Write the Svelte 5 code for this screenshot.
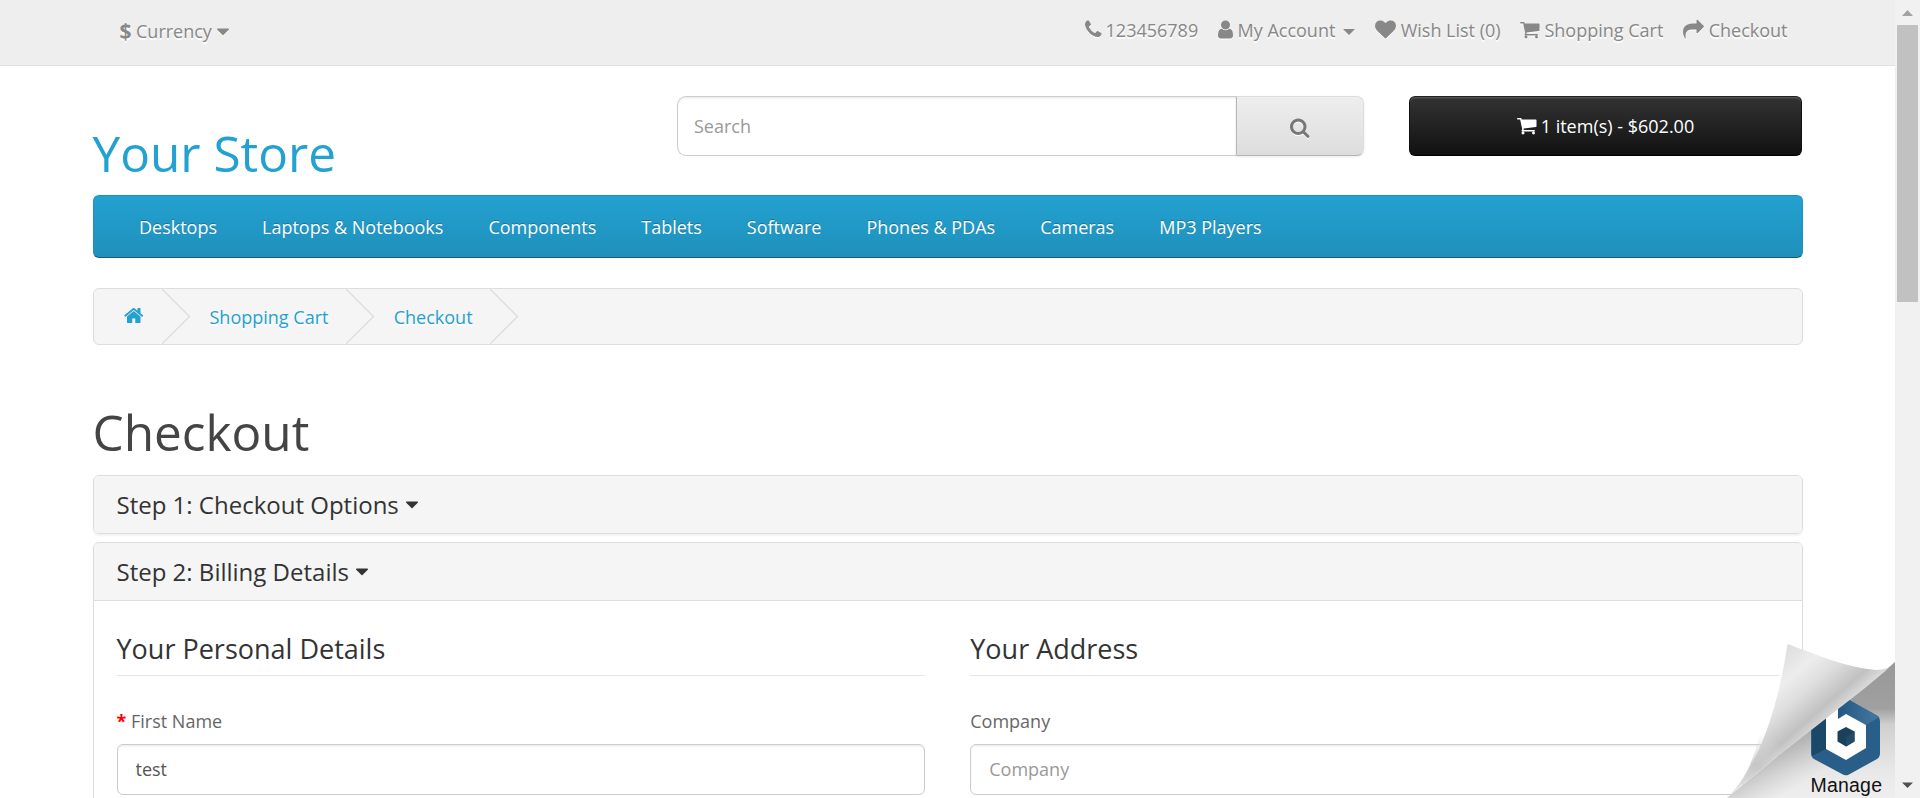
<script>
  const icons = {
    phone: [192, 1408, 'M1600 1240q0 27-10 70.5t-21 68.5q-21 50-122 106-94 51-186 51-27 0-52.5-3.5t-57.5-12.5-47.5-14.5-55.5-20.5-49-18q-98-35-175-83-128-79-264.5-215.5t-215.5-264.5q-48-77-83-175-3-9-18-49t-20.5-55.5-14.5-47.5-12.5-57.5-3.5-52.5q0-92 51-186 56-101 106-122 25-11 68.5-21t70.5-10q14 0 21 3 18 6 53 76 11 19 30 54t35 63.5 31 53.5q3 4 17.5 25t21.5 35.5 7 28.5q0 20-28.5 50t-62 55-62 53-28.5 46q0 9 5 22.5t8.5 20.5 14 24 11.5 19q76 137 174 235t235 174q2 1 19 11.5t24 14 20.5 8.5 22.5 5q18 0 46-28.5t53-62 55-62 50-28.5q14 0 28.5 7t35.5 21.5 25 17.5q25 15 53.5 31t63.5 35 54 30q70 35 76 53 3 7 3 21z'],
    user: [256, 1280, 'M1536 1399q0 109-62.5 187t-150.5 78h-854q-88 0-150.5-78t-62.5-187q0-85 8.5-160.5t31.5-152 58.5-131 94-89 134.5-34.5q131 128 313 128t313-128q76 0 134.5 34.5t94 89 58.5 131 31.5 152 8.5 160.5zm-256-887q0 159-112.5 271.5t-271.5 112.5-271.5-112.5-112.5-271.5 112.5-271.5 271.5-112.5 271.5 112.5 112.5 271.5z'],
    heart: [0, 1792, 'M896 1664q-26 0-44-18l-624-602q-10-8-27.5-26t-55.5-65.5-68-97.5-53.5-121-23.5-138q0-220 127-344t351-124q62 0 126.5 21.5t120 58 95.5 68.5 76 68q36-36 76-68t95.5-68.5 120-58 126.5-21.5q224 0 351 124t127 344q0 221-229 450l-623 600q-18 18-44 18z'],
    cart: [64, 1664, 'M704 1536q0 52-38 90t-90 38-90-38-38-90 38-90 90-38 90 38 38 90zm896 0q0 52-38 90t-90 38-90-38-38-90 38-90 90-38 90 38 38 90zm128-1088v512q0 24-16.5 42.5t-40.5 21.5l-1044 122q13 60 13 70 0 16-24 64h920q26 0 45 19t19 45-19 45-45 19h-1024q-26 0-45-19t-19-45q0-11 8-31.5t16-36 21.5-40 15.5-29.5l-177-823h-204q-26 0-45-19t-19-45 19-45 45-19h256q16 0 28.5 6.5t19.5 15.5 13 24.5 8 26 5.5 29.5 4.5 26h1201q26 0 45 19t19 45z'],
    share: [0, 1792, 'M1792 640q0 26-19 45l-512 512q-19 19-45 19t-45-19-19-45v-256h-224q-98 0-175.5 6t-154 21.5-133 42.5-105.5 69.5-80 101-48.5 138.5-17.5 181q0 55 5 123 0 6 2.5 23.5t2.5 26.5q0 15-8.5 25t-23.5 10q-16 0-28-17-7-9-13-22t-13.5-30-10.5-24q-127-285-127-451 0-199 53-333 162-403 875-403h224v-256q0-26 19-45t45-19 45 19l512 512q19 19 19 45z'],
    search: [64, 1664, 'M1216 832q0-185-131.5-316.5t-316.5-131.5-316.5 131.5-131.5 316.5 131.5 316.5 316.5 131.5 316.5-131.5 131.5-316.5zm512 832q0 52-38 90t-90 38q-54 0-90-38l-343-342q-179 124-399 124-143 0-273.5-55.5t-225-150-150-225-55.5-273.5 55.5-273.5 150-225 225-150 273.5-55.5 273.5 55.5 225 150 150 225 55.5 273.5q0 220-124 399l343 343q37 37 37 90z'],
    home: [64, 1664, 'M1472 992v480q0 26-19 45t-45 19h-384v-384h-256v384h-384q-26 0-45-19t-19-45v-480q0-1 .5-3t.5-3l575-474 575 474q1 2 1 6zm223-69l-62 74q-8 9-21 11h-3q-13 0-21-7l-692-577-692 577q-12 8-24 7-13-2-21-11l-62-74q-8-10-7-23.5t11-21.5l719-599q32-26 76-26t76 26l244 204v-195q0-14 9-23t23-9h192q14 0 23 9t9 23v408l219 182q10 8 11 21.5t-7 23.5z'],
    caret: [384, 1024, 'M1408 704q0 26-19 45l-448 448q-19 19-45 19t-45-19l-448-448q-19-19-19-45t19-45 45-19h896q26 0 45 19t19 45z']
  };
  const links = [
    { icon: 'phone', text: '123456789' },
    { icon: 'user', text: 'My Account', menu: true },
    { icon: 'heart', text: 'Wish List (0)' },
    { icon: 'cart', text: 'Shopping Cart' },
    { icon: 'share', text: 'Checkout' }
  ];
  const categories = ['Desktops', 'Laptops & Notebooks', 'Components', 'Tablets', 'Software', 'Phones & PDAs', 'Cameras', 'MP3 Players'];
  let firstName = $state('test');
</script>

{#snippet icon(name)}
  <svg class="icon" style:width="{(icons[name][1] / 1792) * 21}px" viewBox="{icons[name][0]} 0 {icons[name][1]} 1792" aria-hidden="true"><path d={icons[name][2]} /></svg>
{/snippet}

{#snippet chevron()}
  <svg class="chevron" viewBox="0 0 28 55" aria-hidden="true"><path d="M0 0L27.5 27.5L0 55" /></svg>
{/snippet}

<div class="window">
  <div class="page">
    <nav class="top">
      <div class="container">
        <button class="currency"><strong>$</strong> <span>Currency</span>{@render icon('caret')}</button>
        <ul class="links">
          {#each links as link}
            <li>{@render icon(link.icon)}<span>{link.text}</span>{#if link.menu}<i class="caret"></i>{/if}</li>
          {/each}
        </ul>
      </div>
    </nav>

    <div class="container">
      <header>
        <h1 class="logo">Your Store</h1>
        <div class="search">
          <input type="text" placeholder="Search" />
          <button aria-label="Search">{@render icon('search')}</button>
        </div>
        <button class="cart">{@render icon('cart')}<span>1 item(s) - $602.00</span></button>
      </header>

      <nav class="menu">
        {#each categories as category}<a href="#top">{category}</a>{/each}
      </nav>

      <div class="breadcrumb">
        <a href="#top" aria-label="Home">{@render icon('home')}</a>{@render chevron()}
        <a href="#top">Shopping Cart</a>{@render chevron()}
        <a href="#top">Checkout</a>{@render chevron()}
      </div>

      <h1 class="title">Checkout</h1>

      <section class="panel">
        <h4>Step 1: Checkout Options {@render icon('caret')}</h4>
      </section>
      <section class="panel open">
        <h4>Step 2: Billing Details {@render icon('caret')}</h4>
        <div class="body">
          <fieldset>
            <legend>Your Personal Details</legend>
            <label for="first"><b>*</b> First Name</label>
            <input id="first" type="text" bind:value={firstName} />
          </fieldset>
          <fieldset>
            <legend>Your Address</legend>
            <label for="company">Company</label>
            <input id="company" type="text" placeholder="Company" />
          </fieldset>
        </div>
      </section>
    </div>

    <svg class="peel" viewBox="0 0 195 178" aria-label="Manage">
      <defs>
        <linearGradient id="under" x1="0" y1="0" x2="0" y2="1">
          <stop offset="0" stop-color="#989898" /><stop offset=".34" stop-color="#a0a0a0" />
          <stop offset=".46" stop-color="#cfcfcf" /><stop offset=".8" stop-color="#e8e8e8" /><stop offset="1" stop-color="#eee" />
        </linearGradient>
        <linearGradient id="flap" gradientUnits="userSpaceOnUse" x1="80" y1="35" x2="132" y2="95">
          <stop offset="0" stop-color="#dedede" /><stop offset=".3" stop-color="#ededed" /><stop offset=".55" stop-color="#dedede" />
          <stop offset=".85" stop-color="#c1c1c1" /><stop offset="1" stop-color="#d8d8d8" />
        </linearGradient>
        <linearGradient id="fade" gradientUnits="userSpaceOnUse" x1="75" y1="120" x2="32" y2="176">
          <stop offset="0" stop-color="#ddd" stop-opacity="0" /><stop offset=".45" stop-color="#c8c8c8" stop-opacity=".8" />
          <stop offset="1" stop-color="#eaeaea" />
        </linearGradient>
        <linearGradient id="shade" gradientUnits="userSpaceOnUse" x1="110" y1="110" x2="132" y2="146">
          <stop offset="0" stop-color="#888" stop-opacity=".5" /><stop offset="1" stop-color="#aaa" stop-opacity="0" />
        </linearGradient>
        <linearGradient id="blue" x1="0" y1="0" x2="1" y2="0">
          <stop offset="0" stop-color="#245780" /><stop offset="1" stop-color="#4679a2" />
        </linearGradient>
      </defs>
      <path d="M27 178C50 158 150 80 195 42V178Z" fill="url(#under)" />
      <path d="M27 178L75 138L115 106L150 80V178Z" fill="url(#shade)" />
      <path d="M146 79Q149 80 178 96Q180 98 180 101V133Q180 137 177 139L148 155Q145 156 142 154L114 139Q111 137 111 133V101Z" fill="#295e88" />
      <path d="M112 110L126 98V129L112 136Z" fill="#1b4869" />
      <path d="M148 79L179 97L166 105L146 94L138 99V87Z" fill="url(#blue)" />
      <path d="M126 98L138 86V99L146 94L166 105V128L146 140L126 129Z" fill="#fff" />
      <path d="M146 107L154.500 111.500V121.500L146 126.500L137.500 121.500V111.500Z" fill="#1b4059" />
      <path d="M146 117L154.500 111.500V121.500L146 126.500Z" fill="#214b67" />
      <path d="M87.500 24C120 36 148 48 176 50Q190 50 195 41C188 51 151 79 128 97L75 138L48 160Q37 168 27 178C57 150 78 89 87.500 24Z" fill="url(#flap)" />
      <path d="M60 115L95 122L75 138L48 160Q37 168 27 178C43 163 54 140 60 115Z" fill="url(#fade)" />
      <text x="110.500" y="171.500" textLength="71.500">Manage</text>
    </svg>
  </div>
  <div class="scrollbar">
    <svg width="25" height="25" viewBox="0 0 25 25"><path d="M7 16L12.500 10L18 16Z" fill="#a3a3a3" /></svg>
    <div class="thumb"></div>
    <svg width="25" height="25" viewBox="0 0 25 25"><path d="M7 9.500H18L12.500 15Z" fill="#505050" /></svg>
  </div>
</div>

<style>
  :global(body) { margin: 0; overflow: hidden; }
  .window { display: flex; height: 798px; overflow: hidden; font: 400 18px/27px "Open Sans", sans-serif; color: #666; background: #fff; }
  .window * { box-sizing: border-box; }
  .page { position: relative; flex: 1; height: 798px; overflow: hidden; }
  .container { width: 1710px; margin: 0 auto; }
  button, input { font: inherit; color: inherit; border: 0; margin: 0; outline: 0; }
  h1, h4 { margin: 0; font-weight: 400; }
  a { text-decoration: none; }
  .icon { height: 21px; flex: none; fill: currentColor; overflow: visible; }

  .top { height: 66px; background: #eee; border-bottom: 1px solid #e2e2e2; color: #888; text-shadow: 0 1.500px 0 #fff; }
  .top .container { display: flex; justify-content: space-between; padding: 0 15px 0 27px; }
  .top .icon { filter: drop-shadow(0 1.500px 0 #fff); }
  .currency { display: flex; align-items: center; height: 27px; margin-top: 18px; padding: 0; background: none; text-shadow: inherit; }
  .currency strong { font-size: 21px; margin-right: 4.500px; }
  .currency .icon { margin: -1px 0 0 5px; }
  .links { display: flex; gap: 19.800px; list-style: none; margin: 17px 0 0; padding: 0; height: 27px; }
  .links li { display: flex; align-items: center; }
  .links .icon { margin: -2px 4.500px 0 0; }
  .caret { margin: 2px 0 0 8px; border: 6px solid transparent; border-top-color: #888; border-bottom: 0; }

  header { display: flex; height: 129px; padding-top: 30px; }
  .logo { width: 584.500px; padding-top: 30px; font-size: 49.500px; line-height: 54px; color: #23a1d1; }
  .search { display: flex; width: 687px; height: 60px; margin-right: 45px; }
  .search input { flex: 1; min-width: 0; padding: 1px 16px 0; border: 1px solid #ccc; border-right: 0; border-radius: 9px 0 0 9px; box-shadow: inset 0 1.500px 1.500px rgba(0, 0, 0, .075); }
  input { background: #fff; color: #555; }
  input::placeholder { color: #999; opacity: 1; }
  .search button { display: flex; align-items: center; justify-content: center; width: 128px; padding-top: 4px; color: #777; background: linear-gradient(#eee, #ddd); border: 1px solid; border-color: #ddd #ddd #b3b3b3 #b7b7b7; border-radius: 0 7px 7px 0; box-shadow: 0 1px 3px rgba(0, 0, 0, .08); }
  .search .icon { filter: drop-shadow(0 1.500px 0 #fff); }
  .cart { display: flex; align-items: center; justify-content: center; flex: 1; height: 60px; margin-right: .600px; padding: 1px 0 0; color: #fff; background: linear-gradient(#333, #111); border: 1px solid; border-color: #222 #111 #000; border-radius: 6px; box-shadow: inset 0 1.500px 0 rgba(255, 255, 255, .15); }
  .cart .icon { margin: -2px 4.500px 0 0; }

  .menu { display: flex; height: 63px; padding: 18px 0 0 23px; background: linear-gradient(#23a1d1, #1f90bb); border: 1px solid; border-color: #1f90bb #1f90bb #145e7a; border-radius: 6px; }
  .menu a { padding: 0 22.500px; color: #fff; text-shadow: 0 -1px 0 rgba(0, 0, 0, .25); }

  .breadcrumb { display: flex; align-items: center; height: 57px; margin-top: 30px; padding-left: 10.500px; background: #f5f5f5; border: 1px solid #ddd; border-radius: 6px; }
  .breadcrumb a { display: flex; padding: 2px 17.300px 0 20px; color: #23a1d1; text-shadow: 0 1.500px 0 #fff; }
  .breadcrumb a:first-child { padding-right: 18px; }
  .breadcrumb .icon { margin-bottom: 4px; }
  .chevron { width: 28px; height: 55px; fill: none; stroke: #ddd; stroke-width: 1.300; }

  .title { padding-top: 60px; height: 130px; font-size: 49.500px; line-height: 54px; color: #444; }
  .panel { border: 1px solid #ddd; border-radius: 6px; margin-bottom: 8px; overflow: hidden; box-shadow: 0 1.500px 1.500px rgba(0, 0, 0, .05); }
  .panel h4 { display: flex; align-items: center; gap: 7px; height: 57px; padding: 0 23px 1px; font-size: 24px; line-height: 27px; color: #333; background: #f5f5f5; }
  .panel h4 .icon { margin-top: 1px; }
  .panel.open h4 { height: 58px; border-bottom: 1px solid #ddd; }
  .body { display: grid; grid-template-columns: 1fr 1fr; gap: 45px; height: 300px; padding: 30px 22.500px 30px 23px; }
  fieldset { display: flex; flex-direction: column; min-width: 0; border: 0; margin: 0; padding: 0; }
  legend { width: 100%; padding: 0; height: 45px; border-bottom: 1px solid #e5e5e5; font-size: 27px; line-height: 36px; color: #333; }
  label { display: block; margin: 32px 0 9px; }
  label b { color: #f00; }
  fieldset input { height: 51px; width: 100%; padding: 0 18px 2px; border: 1px solid #ccc; border-radius: 6px; box-shadow: inset 0 1.500px 1.500px rgba(0, 0, 0, .075); }

  .peel { position: absolute; right: 0; bottom: 0; width: 195px; height: 178px; }
  .peel text { font: 19.500px "Liberation Sans", sans-serif; fill: #111; }
  .scrollbar { display: flex; flex-direction: column; width: 25px; background: #f1f1f1; }
  .scrollbar svg:last-child { margin-top: auto; }
  .thumb { height: 277px; margin: 0 2px; background: #c1c1c1; }
</style>
